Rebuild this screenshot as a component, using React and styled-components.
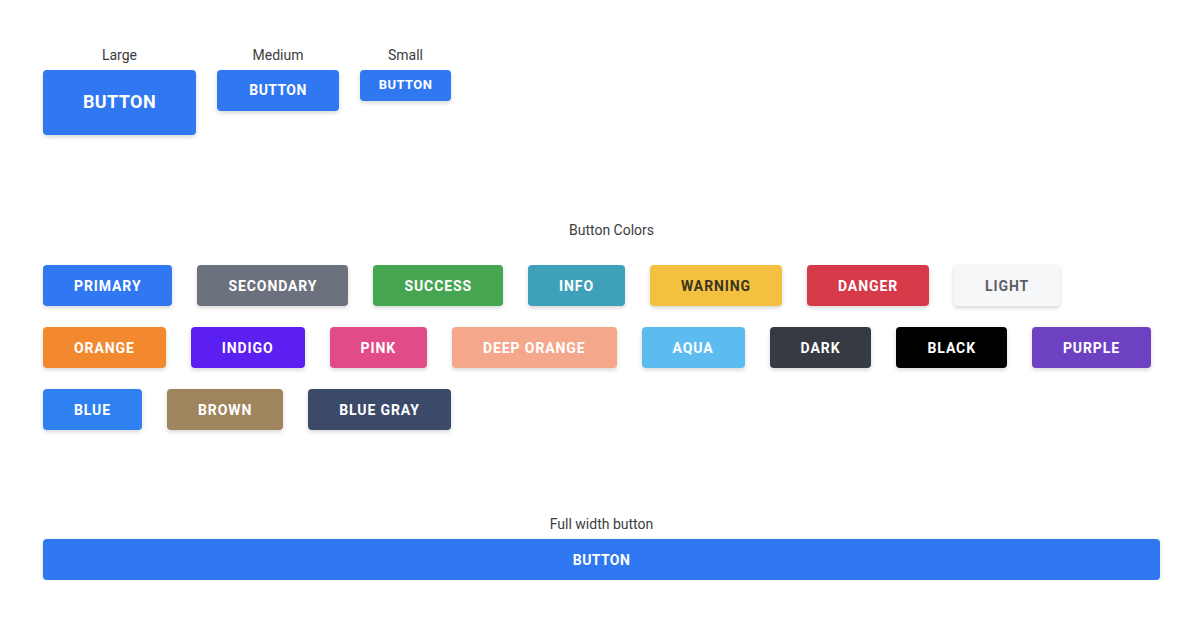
import React from 'react';
import styled, { createGlobalStyle } from 'styled-components';

const GlobalStyle = createGlobalStyle`
    html, body {
        margin: 0;
        padding: 0;
        background: #ffffff;
        font-family: Roboto, 'Liberation Sans', Arial, sans-serif;
    }
`;

const Page = styled.div`
    display: flex;
    flex-direction: column;
    padding: 47px 36px 0 43px;
`;

const SizesRow = styled.div`
    display: flex;
    align-items: flex-start;
    gap: 21px;
`;

const SizeGroup = styled.div`
    display: flex;
    flex-direction: column;
    align-items: center;
    gap: 6px;
`;

const Caption = styled.span`
    font-size: 14px;
    line-height: 17px;
    color: #3d3d3d;
    text-align: center;
`;

const Section = styled.section`
    display: flex;
    flex-direction: column;
    margin-top: ${(p) => p.$top}px;
    gap: ${(p) => p.$gap}px;
`;

const SectionTitle = styled(Caption)`
    padding-left: ${(p) => p.$shift || 0}px;
`;

const sizes = {
    large: { width: 153, height: 65, font: 18 },
    medium: { width: 122, height: 41, font: 14 },
    small: { width: 91, height: 31, font: 13 },
};

const Button = styled.button`
    display: inline-flex;
    align-items: center;
    justify-content: center;
    box-sizing: border-box;
    height: ${(p) => (p.$size ? sizes[p.$size].height : 41)}px;
    width: ${(p) =>
        p.$full ? '100%' : p.$size ? `${sizes[p.$size].width}px` : 'auto'};
    padding: ${(p) => (p.$size ? '0' : '0 31px')};
    padding-bottom: ${(p) => (p.$size === 'small' ? '3px' : p.$size ? '2px' : '0')};
    border: none;
    border-radius: 4px;
    background-color: ${(p) => p.$bg || '#3078f2'};
    color: ${(p) => p.$fg || '#ffffff'};
    font-family: Roboto, 'Liberation Sans', Arial, sans-serif;
    font-size: ${(p) => (p.$size ? sizes[p.$size].font : 14)}px;
    font-weight: 700;
    letter-spacing: ${(p) => (p.$size || p.$full ? '0.4px' : '0.9px')};
    text-transform: uppercase;
    box-shadow: 0 2px 4px rgba(0, 0, 0, 0.16);
    cursor: pointer;
`;

const ColorGrid = styled.div`
    display: flex;
    flex-wrap: wrap;
    column-gap: 25px;
    row-gap: 21px;
`;

const colors = [
    { name: 'primary', bg: '#3078f2' },
    { name: 'secondary', bg: '#6b717d' },
    { name: 'success', bg: '#45a551' },
    { name: 'info', bg: '#3fa0b9' },
    { name: 'warning', bg: '#f3c03f', fg: '#3a3320' },
    { name: 'danger', bg: '#d63a48' },
    { name: 'light', bg: '#f6f7f9', fg: '#5c5f66' },
    { name: 'orange', bg: '#f3892f' },
    { name: 'indigo', bg: '#5b1ff1' },
    { name: 'pink', bg: '#e14b88' },
    { name: 'deep orange', bg: '#f4a78b' },
    { name: 'aqua', bg: '#5cbcf0' },
    { name: 'dark', bg: '#363a42' },
    { name: 'black', bg: '#000000' },
    { name: 'purple', bg: '#6e41c2' },
    { name: 'blue', bg: '#2f80f0' },
    { name: 'brown', bg: '#9f855e' },
    { name: 'blue gray', bg: '#3c4a6a' },
];

const App = () => {
    return (
        <Page>
            <GlobalStyle />
            <SizesRow>
                <SizeGroup>
                    <Caption>Large</Caption>
                    <Button $size="large">Button</Button>
                </SizeGroup>
                <SizeGroup>
                    <Caption>Medium</Caption>
                    <Button $size="medium">Button</Button>
                </SizeGroup>
                <SizeGroup>
                    <Caption>Small</Caption>
                    <Button $size="small">Button</Button>
                </SizeGroup>
            </SizesRow>

            <Section $top={87} $gap={26}>
                <SectionTitle $shift={20}>Button Colors</SectionTitle>
                <ColorGrid>
                    {colors.map((c) => (
                        <Button key={c.name} $bg={c.bg} $fg={c.fg}>
                            {c.name}
                        </Button>
                    ))}
                </ColorGrid>
            </Section>

            <Section $top={86} $gap={6}>
                <SectionTitle>Full width button</SectionTitle>
                <Button $full>Button</Button>
            </Section>
        </Page>
    );
};

export default App;
